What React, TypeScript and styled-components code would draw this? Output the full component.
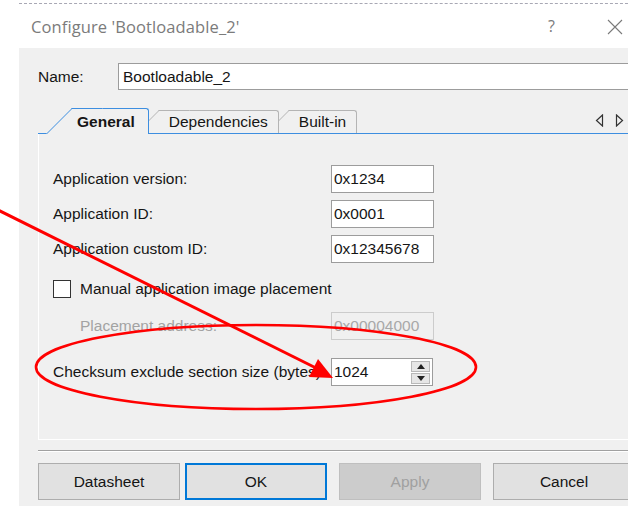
import styled, { createGlobalStyle } from 'styled-components';

const GlobalStyle = createGlobalStyle`
  html, body {
    margin: 0;
    padding: 0;
    background: #ffffff;
  }
  body {
    font-family: 'Liberation Sans', Arial, sans-serif;
  }
`;

const fields = [
  { label: 'Application version:', value: '0x1234' },
  { label: 'Application ID:', value: '0x0001' },
  { label: 'Application custom ID:', value: '0x12345678' },
];

export default function App() {
  return (
    <Screen>
      <GlobalStyle />
      <Dialog>
        <TopRule />
        <TitleBar>
          <Title>Configure 'Bootloadable_2'</Title>
          <Help>?</Help>
          <svg width='16' height='16' viewBox='0 0 16 16'>
            <path d='M1 1 L15 15 M15 1 L1 15' stroke='#7a7a7a' strokeWidth='1.1' />
          </svg>
        </TitleBar>

        <Body>
          <NameRow>
            <NameLabel>Name:</NameLabel>
            <NameInput>Bootloadable_2</NameInput>
          </NameRow>

          <TabStrip>
            <Tab $active $z={3}>General</Tab>
            <Tab $z={2}>Dependencies</Tab>
            <Tab $z={1}>Built-in</Tab>
            <Scroller>
              <svg width='9' height='13' viewBox='0 0 9 13'>
                <path d='M7.5 1 L1.5 6.5 L7.5 12 Z' fill='none' stroke='#333' strokeWidth='1.2' />
              </svg>
              <svg width='9' height='13' viewBox='0 0 9 13'>
                <path d='M1.5 1 L7.5 6.5 L1.5 12 Z' fill='none' stroke='#333' strokeWidth='1.2' />
              </svg>
            </Scroller>
          </TabStrip>

          <Panel>
            {fields.map(({ label, value }, index) => (
              <Field key={label} $top={index === 0 ? 0 : 7}>
                <Label>{label}</Label>
                <TextBox>{value}</TextBox>
              </Field>
            ))}

            <Field $top={12}>
              <CheckBox />
              <Label $inset={9} $auto>
                Manual application image placement
              </Label>
            </Field>

            <Field $top={9}>
              <Label $disabled $inset={27}>
                Placement address:
              </Label>
              <TextBox $disabled>0x00004000</TextBox>
            </Field>

            <Field $top={18}>
              <Label>Checksum exclude section size (bytes):</Label>
              <SpinBox>
                <span>1024</span>
                <Spinner>
                  <SpinButton>
                    <svg width='8' height='5' viewBox='0 0 8 5'>
                      <path d='M0 5 L4 0 L8 5 Z' fill='#222' />
                    </svg>
                  </SpinButton>
                  <SpinButton>
                    <svg width='8' height='5' viewBox='0 0 8 5'>
                      <path d='M0 0 L4 5 L8 0 Z' fill='#222' />
                    </svg>
                  </SpinButton>
                </Spinner>
              </SpinBox>
            </Field>
          </Panel>

          <Separator />

          <ButtonRow>
            <Button>Datasheet</Button>
            <ButtonGroup>
              <Button $focused>OK</Button>
              <Button $disabled>Apply</Button>
              <Button>Cancel</Button>
            </ButtonGroup>
          </ButtonRow>
        </Body>
      </Dialog>

      {/* red markup drawn over the dialog */}
      <Markup width='628' height='506' viewBox='0 0 628 506'>
        <ellipse cx='256' cy='367' rx='220' ry='42' fill='none' stroke='#ff0000' strokeWidth='2.6' />
        <line x1='-2' y1='210' x2='316' y2='368' stroke='#ff0000' strokeWidth='3' />
        <polygon points='333,378 318,359 309,377' fill='#ff0000' />
      </Markup>
    </Screen>
  );
}

const Screen = styled.div`
  position: relative;
  width: 628px;
  height: 506px;
  overflow: hidden;
  background: #ffffff;
`;

const Dialog = styled.div`
  margin-left: 19px;
  width: 624px;
  display: flex;
  flex-direction: column;
`;

const TopRule = styled.div`
  margin-top: 3px;
  border-top: 1px dashed #a8a8b4;
`;

const TitleBar = styled.div`
  height: 44px;
  background: #ffffff;
  display: flex;
  align-items: center;
  padding: 0 20px 0 12px;

  svg {
    margin-top: 1px;
  }
`;

const Title = styled.div`
  flex: 1;
  font-family: 'Open Sans', 'Noto Sans', sans-serif;
  font-size: 16.5px;
  color: #7b7b7b;
  letter-spacing: 0.1px;
`;

const Help = styled.span`
  font-family: 'Open Sans', sans-serif;
  font-size: 16px;
  color: #7b7b7b;
  margin-right: 52px;
`;

const Body = styled.div`
  background: #f0f0f0;
  padding: 15px 0 6px 19px;
  display: flex;
  flex-direction: column;
  font-size: 15.5px;
  color: #151515;
`;

const NameRow = styled.div`
  display: flex;
  align-items: center;
  height: 27px;
`;

const NameLabel = styled.span`
  width: 80px;
`;

const NameInput = styled.div`
  flex: 1;
  height: 27px;
  box-sizing: border-box;
  background: #ffffff;
  border: 1px solid #9c9c9c;
  border-right: none;
  padding: 0 4px;
  display: flex;
  align-items: center;
`;

const TabStrip = styled.div`
  margin-top: 17px;
  height: 26px;
  display: flex;
  align-items: flex-end;
  border-bottom: 1px solid #3d8ee0;
  padding-left: 34px;
`;

const Tab = styled.div<{ $active?: boolean; $z: number }>`
  position: relative;
  z-index: ${(p) => p.$z};
  height: ${(p) => (p.$active ? 26 : 23)}px;
  margin-bottom: ${(p) => (p.$active ? -1 : 0)}px;
  margin-left: ${(p) => (p.$active ? 0 : 10)}px;
  box-sizing: border-box;
  padding: ${(p) => (p.$active ? '1px 13px 0 5px' : '0 10px')};
  display: flex;
  align-items: center;
  font-size: 15.5px;
  font-weight: ${(p) => (p.$active ? 700 : 400)};
  background: #f0f0f0;
  border: 1px solid ${(p) => (p.$active ? '#3d8ee0' : '#b4b4b4')};
  border-left: none;
  border-bottom: none;
  border-top-right-radius: 3px;

  &::before {
    content: '';
    position: absolute;
    z-index: -1;
    top: -1px;
    bottom: 0;
    left: ${(p) => (p.$active ? -26 : -23)}px;
    width: 30px;
    background: #f0f0f0;
    border-left: 1px solid ${(p) => (p.$active ? '#3d8ee0' : '#b4b4b4')};
    border-top: 1px solid ${(p) => (p.$active ? '#3d8ee0' : '#b4b4b4')};
    transform: skewX(-45deg);
    transform-origin: bottom left;
  }
`;

const Scroller = styled.div`
  margin-left: auto;
  margin-right: 19px;
  align-self: center;
  display: flex;
  gap: 11px;
`;

const Panel = styled.div`
  height: 306px;
  box-sizing: border-box;
  border-left: 1px solid #ffffff;
  border-bottom: 1px solid #ffffff;
  padding: 31px 0 0 14px;
  display: flex;
  flex-direction: column;
`;

const Field = styled.div<{ $top: number }>`
  display: flex;
  align-items: center;
  height: 28px;
  margin-top: ${(p) => p.$top}px;
`;

const Label = styled.span<{ $disabled?: boolean; $inset?: number; $auto?: boolean }>`
  width: ${(p) => (p.$auto ? 'auto' : `${278 - (p.$inset ?? 0)}px`)};
  margin-left: ${(p) => p.$inset ?? 0}px;
  color: ${(p) => (p.$disabled ? '#a3a3a3' : 'inherit')};
  white-space: nowrap;
`;

const TextBox = styled.div<{ $disabled?: boolean }>`
  width: 103px;
  height: 28px;
  box-sizing: border-box;
  padding: 0 2px;
  display: flex;
  align-items: center;
  background: ${(p) => (p.$disabled ? '#f0f0f0' : '#ffffff')};
  border: 1px solid ${(p) => (p.$disabled ? '#cccccc' : '#9c9c9c')};
  color: ${(p) => (p.$disabled ? '#a8a8a8' : 'inherit')};
`;

const CheckBox = styled.div`
  width: 18px;
  height: 18px;
  box-sizing: border-box;
  background: #ffffff;
  border: 1px solid #333333;
`;

const SpinBox = styled.div`
  width: 102px;
  height: 28px;
  box-sizing: border-box;
  padding: 0 2px 0 2px;
  display: flex;
  align-items: center;
  justify-content: space-between;
  background: #ffffff;
  border: 1px solid #9c9c9c;
`;

const Spinner = styled.div`
  display: flex;
  flex-direction: column;
  gap: 1px;
`;

const SpinButton = styled.div`
  width: 19px;
  height: 11px;
  box-sizing: border-box;
  display: flex;
  align-items: center;
  justify-content: center;
  background: #e6e6e6;
  border: 1px solid #b8b8b8;
`;

const Separator = styled.div`
  margin-top: 10px;
  border-top: 1px solid #a0a0a0;
  border-bottom: 1px solid #ffffff;
`;

const ButtonRow = styled.div`
  margin-top: 11px;
  display: flex;
`;

const ButtonGroup = styled.div`
  display: flex;
  gap: 12px;
  margin-left: 5px;
`;

const Button = styled.div<{ $focused?: boolean; $disabled?: boolean }>`
  width: 142px;
  height: 37px;
  box-sizing: border-box;
  display: flex;
  align-items: center;
  justify-content: center;
  font-size: 15.5px;
  background: ${(p) => (p.$disabled ? '#cccccc' : '#e1e1e1')};
  color: ${(p) => (p.$disabled ? '#a0a0a0' : '#151515')};
  border: ${(p) => (p.$focused ? '2px solid #0078d7' : `1px solid ${p.$disabled ? '#bfbfbf' : '#adadad'}`)};
`;

const Markup = styled.svg`
  position: absolute;
  left: 0;
  top: 0;
  pointer-events: none;
`;
